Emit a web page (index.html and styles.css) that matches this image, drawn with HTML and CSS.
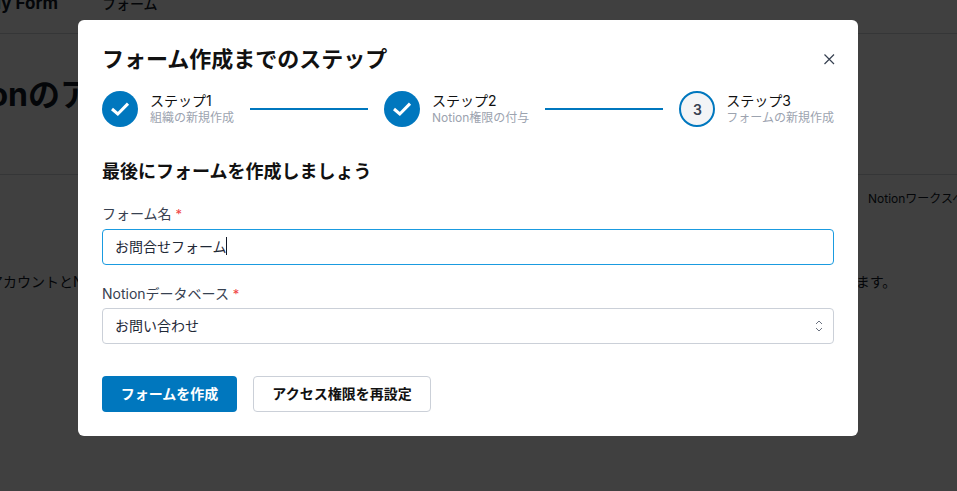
FILE: index.html
```html
<!DOCTYPE html>
<html lang="ja">
<head>
<meta charset="utf-8">
<title>フォーム作成までのステップ</title>
<link rel="stylesheet" href="styles.css">
</head>
<body>
<div class="page">
  <header class="topbar">
    <div class="brand">Notion My Form</div>
    <nav class="nav">フォーム</nav>
  </header>
  <section class="hero">
    <h1 class="hero-title">Notionのアカウント連携</h1>
  </section>
  <section class="content">
    <p class="side-note">Notionワークスペース</p>
    <p class="desc">アカウントとNotionワークスペースを連携することで、フォームの回答内容をNotionデータベースへ常に自動で全て保存できるようになります。</p>
  </section>
</div>
<div class="overlay">
  <div class="modal" role="dialog">
    <div class="modal-head">
      <h2 class="modal-title">フォーム作成までのステップ</h2>
      <svg class="close" viewBox="0 0 12 12" width="12" height="12"><path d="M1.5 1.5l9.5 9.5M11 1.5L1.5 11" fill="none" stroke="#374151" stroke-width="1.2"/></svg>
    </div>
    <ol class="steps">
      <li class="step">
        <span class="dot dot-done"><svg viewBox="0 0 20 20" width="20" height="20"><path d="M2 10l5.8 5L18 4.6" fill="none" stroke="#fff" stroke-width="3"/></svg></span>
        <span class="step-text"><span class="step-name">ステップ1</span><span class="step-sub">組織の新規作成</span></span>
      </li>
      <li class="rule"></li>
      <li class="step">
        <span class="dot dot-done"><svg viewBox="0 0 20 20" width="20" height="20"><path d="M2 10l5.8 5L18 4.6" fill="none" stroke="#fff" stroke-width="3"/></svg></span>
        <span class="step-text"><span class="step-name">ステップ2</span><span class="step-sub">Notion権限の付与</span></span>
      </li>
      <li class="rule"></li>
      <li class="step step-last">
        <span class="dot dot-current">3</span>
        <span class="step-text"><span class="step-name">ステップ3</span><span class="step-sub">フォームの新規作成</span></span>
      </li>
    </ol>
    <h3 class="section-title">最後にフォームを作成しましょう</h3>
    <div class="field">
      <div class="label">フォーム名 <span class="req">*</span></div>
      <div class="input input-focus"><span>お問合せフォーム</span><span class="caret"></span></div>
    </div>
    <div class="field field-db">
      <div class="label">Notionデータベース <span class="req">*</span></div>
      <div class="input input-select"><span>お問い合わせ</span>
        <svg viewBox="0 0 8 14" width="8" height="14"><path d="M1 5l3-3 3 3M1 9l3 3 3-3" fill="none" stroke="#6b7280" stroke-width="1"/></svg>
      </div>
    </div>
    <div class="actions">
      <button class="btn btn-primary" type="button">フォームを作成</button>
      <button class="btn btn-outline" type="button">アクセス権限を再設定</button>
    </div>
  </div>
</div>
</body>
</html>
```
FILE: styles.css
```css
* { box-sizing: border-box; }
html, body { margin: 0; height: 100%; overflow: hidden; }
body {
  background: #fff;
  color: #111827;
  font-family: Inter, "Noto Sans CJK JP", sans-serif;
  font-size: 14px;
}
.page { width: 957px; height: 491px; overflow: hidden; }
.topbar {
  display: flex;
  align-items: center;
  gap: 44px;
  margin-top: -28px;
  height: 62px;
  border-bottom: 1px solid #d1d5db;
}
.brand {
  width: 58px;
  display: flex;
  justify-content: flex-end;
  overflow: hidden;
  white-space: nowrap;
  font-size: 17px;
  font-weight: 700;
}
.nav { font-size: 14px; font-weight: 500; }
.hero {
  height: 141px;
  padding-top: 39px;
  border-bottom: 1px solid #d1d5db;
  overflow: hidden;
}
.hero-title {
  margin: 0 0 0 -76px;
  font-size: 32px;
  line-height: 44px;
  font-weight: 700;
  white-space: nowrap;
}
.content { height: 320px; overflow: hidden; }
.side-note {
  margin: 15px 0 0 868px;
  font-size: 12px;
  line-height: 18px;
  white-space: nowrap;
}
.desc {
  margin: 63px 0 0 -11px;
  font-size: 14px;
  line-height: 22px;
  white-space: nowrap;
}
.overlay {
  position: fixed;
  inset: 0;
  background: rgba(0, 0, 0, .75);
  display: flex;
  justify-content: flex-start;
  align-items: flex-start;
  padding: 20px 0 0 78px;
}
.modal {
  width: 780px;
  height: 416px;
  flex: none;
  background: #fff;
  border-radius: 6px;
  padding: 24px;
}
.modal-head { display: flex; align-items: center; justify-content: space-between; height: 28px; margin-top: 1px; margin-bottom: 18px; }
.modal-title { margin: 0; font-size: 22px; line-height: 28px; font-weight: 700; color: #111; }
.close { margin-right: -1px; }
.steps { list-style: none; display: flex; align-items: center; margin: 0; padding: 0; height: 36px; }
.step { display: flex; align-items: center; gap: 12px; flex: none; }
.step-last { gap: 11px; }
.rule { flex: 1; height: 2px; background: #0077be; margin: 0 16px; }
.dot {
  width: 36px; height: 36px; border-radius: 50%;
  display: flex; align-items: center; justify-content: center;
  flex: none;
}
.dot-done { background: #0077be; }
.dot-current {
  background: #f3f4f6;
  border: 2px solid #0077be;
  color: #374151;
  font-size: 14px;
  font-weight: 600;
}
.step-text { display: flex; flex-direction: column; }
.step-name { font-size: 14px; line-height: 17px; color: #111; }
.step-sub { font-size: 12px; line-height: 18px; color: #9ca3af; }
.section-title { margin: 32px 0 0; font-size: 18px; line-height: 26px; font-weight: 700; color: #111; }
.field { margin-top: 19px; }
.field-db { margin-top: 19px; }
.label { font-size: 14px; line-height: 20px; color: #374151; margin-bottom: 5px; }
.field-db .label { margin-bottom: 4px; }
.req { color: #ef4444; font-size: 13px; }
.input {
  height: 36px;
  border: 1px solid #cbd0d8;
  border-radius: 4px;
  padding: 0 12px 3px;
  display: flex;
  align-items: center;
  font-size: 14px;
  color: #1f2937;
}
.input-focus { border-color: #1a9be0; }
.input-select { justify-content: space-between; padding: 0 10px 0 12px; }
.input-select span { padding-bottom: 3px; }
.caret { width: 1px; height: 18px; background: #111827; margin-left: -1px; }
.actions { display: flex; gap: 16px; margin-top: 32px; }
.btn {
  height: 36px;
  border-radius: 4px;
  font-family: inherit;
  font-size: 14px;
  font-weight: 700;
  border: 1px solid transparent;
  padding: 0 0 2px;
}
.btn-primary { width: 135px; background: #0077be; color: #fff; }
.btn-outline { width: 178px; background: #fff; border-color: #cbd0d8; color: #111; }
```
